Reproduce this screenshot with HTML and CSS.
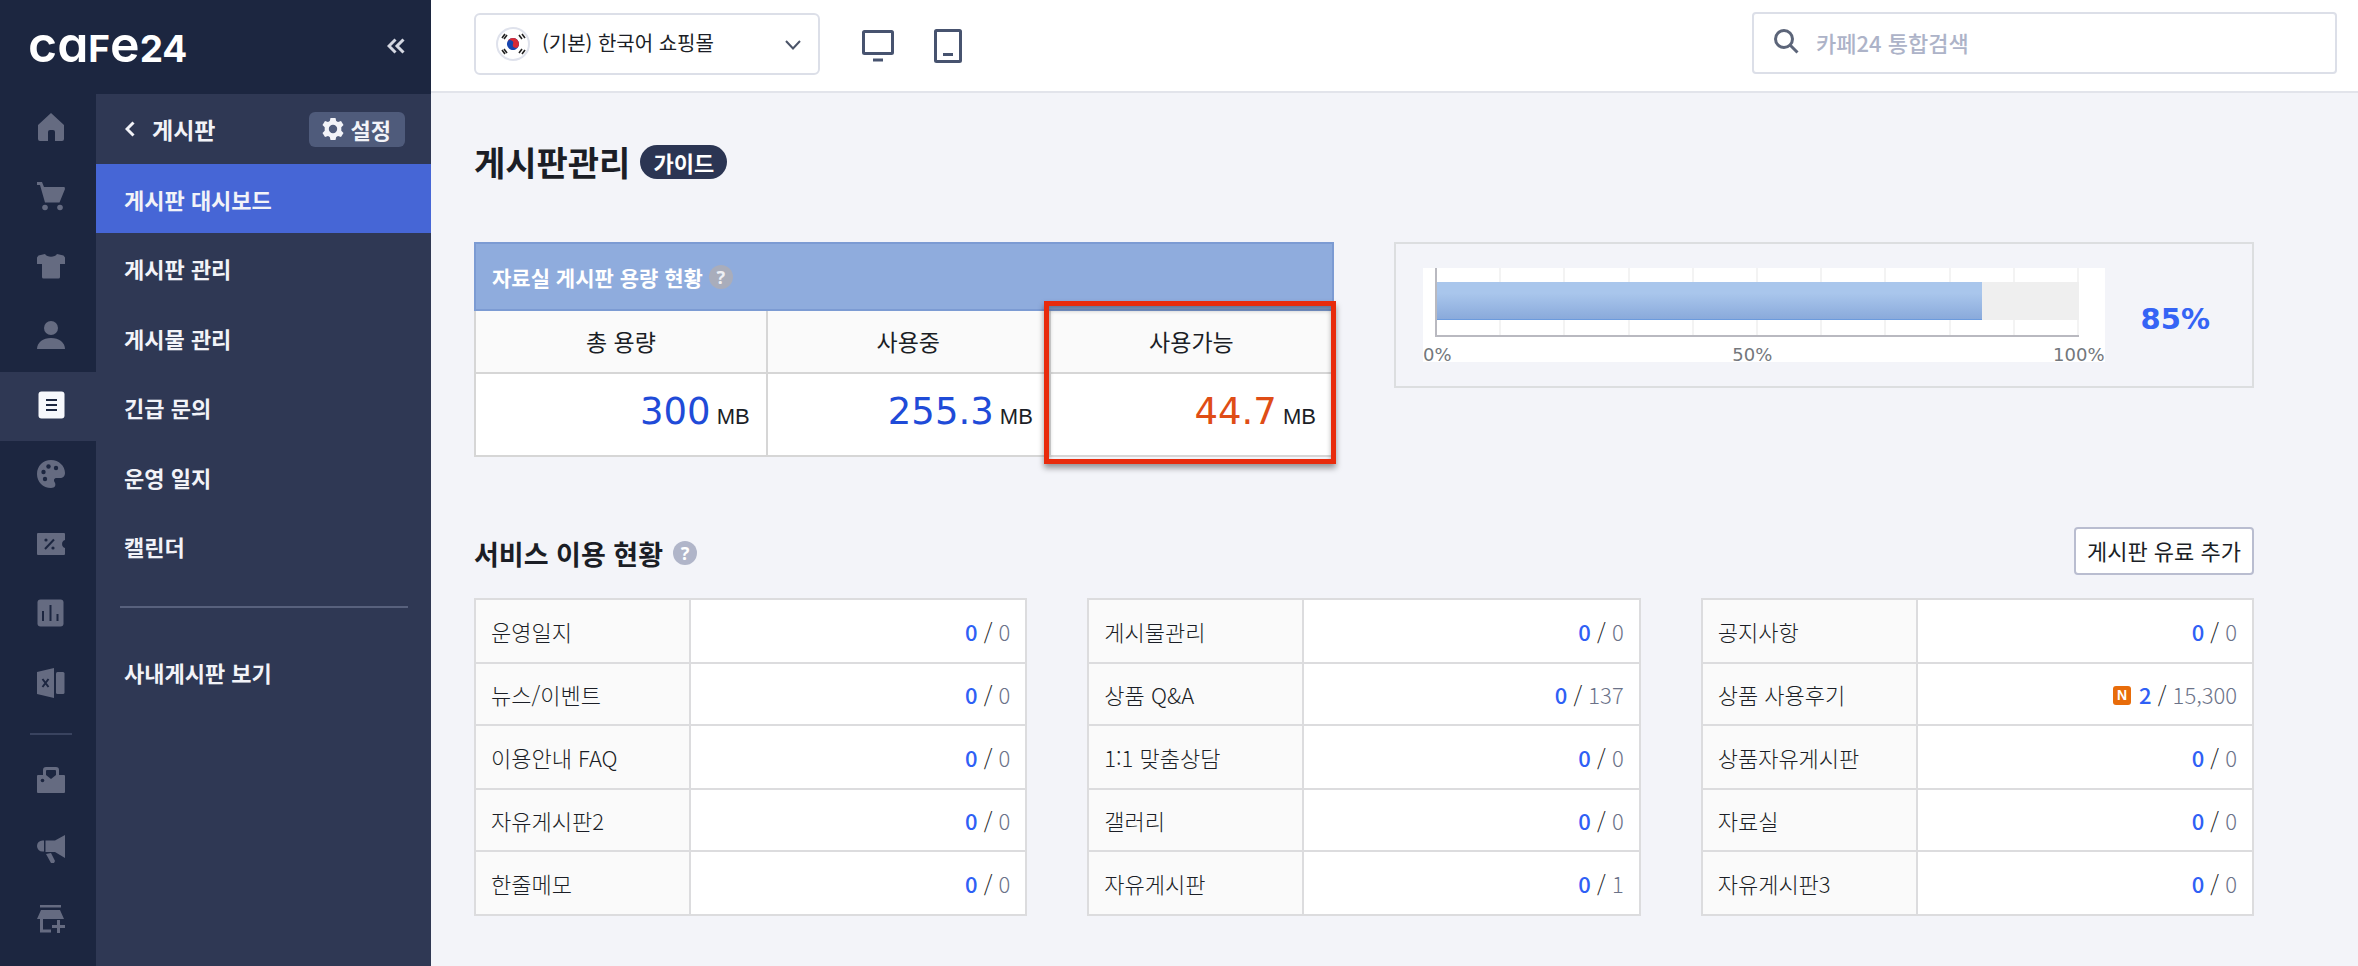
FILE: index.html
```html
<!DOCTYPE html>
<html lang="ko">
<head>
<meta charset="utf-8">
<title>게시판관리</title>
<link rel="stylesheet" href="styles.css">
</head>
<body>
<div class="app">
  <aside class="sidebar">
    <div class="brand">
      <a class="logo" href="#"><span class="logo-low">ca</span>F<span class="logo-low">e</span>24</a>
      <button class="collapse" type="button" aria-label="메뉴 접기">
        <svg width="18" height="16" viewBox="0 0 18 16"><path d="M8.500 1.500 2 8l6.500 6.500M16.500 1.500 10 8l6.500 6.500"/></svg>
      </button>
    </div>
    <div class="menus">
      <nav class="rail" aria-label="주 메뉴">
        <ul>
          <li><a href="#" aria-label="홈"><svg viewBox="0 0 28 28"><path d="M14 0 27 12v14a2 2 0 0 1-2 2h-7v-9a2 2 0 0 0-2-2h-3a2 2 0 0 0-2 2v9H3a2 2 0 0 1-2-2V12z"/></svg></a></li>
          <li><a href="#" aria-label="주문"><svg viewBox="0 0 28 28"><path d="M0 0h5l2 5h20.500l.5 2-5.500 13.500H8L3 3H0z"/><circle cx="8" cy="25.500" r="2.800"/><circle cx="23" cy="25.500" r="2.800"/></svg></a></li>
          <li><a href="#" aria-label="상품"><svg viewBox="0 0 28 28"><path d="M8 2c2 3.500 10 3.500 12 0l6.500 1.500 1.500 2V12h-5v13a1.500 1.500 0 0 1-1.500 1.500h-15A1.500 1.500 0 0 1 5 25V12H0V5.500l1.500-2z"/></svg></a></li>
          <li><a href="#" aria-label="고객"><svg viewBox="0 0 28 28"><circle cx="14" cy="7" r="7"/><path d="M0 28c0-6.500 6-11 14-11s14 4.500 14 11z"/></svg></a></li>
          <li class="on"><a href="#" aria-label="게시판" aria-current="page"><svg viewBox="0 0 28 28"><rect x="1.500" y="0.500" width="26" height="27" rx="3"/><path class="cut" d="M9 9h11M9 14h11M9 19h11"/></svg></a></li>
          <li><a href="#" aria-label="디자인"><svg viewBox="0 0 28 28"><path d="M14 0c8 0 14 6 14 13 0 3-2 5-5 5h-3c-3 0-3.500 2-2.500 4 2 3 .5 6-3.500 6C6 28 0 22 0 14S6 0 14 0z"/><g class="hole"><circle cx="6.500" cy="12" r="2.200"/><circle cx="11.500" cy="6.500" r="2.200"/><circle cx="19" cy="8" r="2.200"/><circle cx="8" cy="19" r="2.200"/></g></svg></a></li>
          <li><a href="#" aria-label="프로모션"><svg viewBox="0 0 28 28"><path d="M1 3h26a1 1 0 0 1 1 1v6a4.200 4.200 0 0 0 0 8v6a1 1 0 0 1-1 1H1a1 1 0 0 1-1-1V4a1 1 0 0 1 1-1z"/><path class="cut" d="M17 9.500 8 19"/><g class="hole"><circle cx="9" cy="10" r="1.600"/><circle cx="16" cy="18" r="1.600"/></g></svg></a></li>
          <li><a href="#" aria-label="통계"><svg viewBox="0 0 28 28"><rect x="0.500" y="0.500" width="26" height="27" rx="3"/><path class="cut" d="M6 12v10M13.500 6v16M20.500 15v7"/></svg></a></li>
          <li><a href="#" aria-label="엑셀"><svg viewBox="0 0 28 28"><path d="m0 3 17-4v30L0 25z"/><rect x="19" y="3" width="8.500" height="22" rx="1.500"/><path class="cut" d="m5.500 10 6 8m0-8-6 8"/></svg></a></li>
        </ul>
        <hr>
        <ul>
          <li><a href="#" aria-label="앱"><svg viewBox="0 0 28 28"><path d="M6 9V4a3 3 0 0 1 3-3h10a3 3 0 0 1 3 3v5h-3V5a1 1 0 0 0-1-1h-8a1 1 0 0 0-1 1v4z"/><path d="M1 9h8l5 4 5-4h8a1 1 0 0 1 1 1v16a1 1 0 0 1-1 1H1a1 1 0 0 1-1-1V10a1 1 0 0 1 1-1z"/><circle class="hole" cx="5.500" cy="14.500" r="1.800"/></svg></a></li>
          <li><a href="#" aria-label="마케팅"><svg viewBox="0 0 28 28"><path d="M7 5.500v11H5.500a5.500 5.500 0 0 1 0-11zM8.500 5.500H18L28 0v23l-10-6H8.500z"/><path d="m9 19 5-1 4 8-1 2h-3z"/></svg></a></li>
          <li><a href="#" aria-label="스토어"><svg viewBox="0 0 28 28"><path d="M3 0h21v2.500H3zM4 5h19l4 9H0z"/><path class="line" d="M4.500 14v12H14"/><path class="line" d="M21.500 15v13M15 21.500h13"/></svg></a></li>
        </ul>
      </nav>
      <nav class="panel" aria-label="게시판">
        <div class="panel-head">
          <a class="back" href="#"><svg width="10" height="16" viewBox="0 0 10 16"><path d="M8.500 1.500 2 8l6.500 6.500"/></svg>게시판</a>
          <button class="settings" type="button"><svg width="22" height="22" viewBox="0 0 22 22"><path fill-rule="evenodd" d="M8.500 0h5l.7 3 1.800 1 3-1L21.500 7l-2.200 2.200v3.600L21.500 15 19 19l-3-1-1.800 1-.7 3h-5l-.7-3L6 18l-3 1-2.500-4 2.200-2.200V9.200L.5 7 3 3l3 1 1.800-1zM11 6.800a4.200 4.200 0 1 0 0 8.400 4.200 4.200 0 0 0 0-8.400z"/></svg>설정</button>
        </div>
        <ul>
          <li class="on"><a href="#" aria-current="page">게시판 대시보드</a></li>
          <li><a href="#">게시판 관리</a></li>
          <li><a href="#">게시물 관리</a></li>
          <li><a href="#">긴급 문의</a></li>
          <li><a href="#">운영 일지</a></li>
          <li><a href="#">캘린더</a></li>
        </ul>
        <hr>
        <ul>
          <li><a href="#">사내게시판 보기</a></li>
        </ul>
      </nav>
    </div>
  </aside>

  <div class="page">
    <header class="topbar">
      <div class="mall">
        <svg class="flag" width="34" height="34" viewBox="0 0 34 34" aria-hidden="true">
          <circle cx="17" cy="17" r="16" fill="#fff" stroke="#dfe2ec" stroke-width="2"/>
          <g transform="rotate(20 17 17)"><circle cx="17" cy="17" r="6" fill="#1746b0"/><path d="M11 17a6 6 0 0 1 12 0 3 3 0 0 1-6 0 3 3 0 0 0-6 0z" fill="#d92a35"/></g>
          <path d="m6 11 3-4M8 12l3-4M23 8l3 4M26 7l3 4M6 23l3 4M8 22l3 4M23 26l3-4M26 27l3-4" stroke="#222" stroke-width="1.600"/>
        </svg>
        <select aria-label="쇼핑몰 선택"><option>(기본) 한국어 쇼핑몰</option></select>
        <svg class="arrow" width="16" height="10" viewBox="0 0 16 10" aria-hidden="true"><path d="m1 1 7 7.500L15 1"/></svg>
      </div>
      <button class="device" type="button" aria-label="PC"><svg width="32" height="32" viewBox="0 0 32 32"><rect x="1.500" y="1.500" width="29" height="22" rx="1"/><path d="M11 30h10"/></svg></button>
      <button class="device" type="button" aria-label="모바일"><svg width="28" height="34" viewBox="0 0 28 34"><rect x="1.500" y="1.500" width="25" height="31" rx="1"/><path d="M9 25.500h10"/></svg></button>
      <div class="search">
        <svg width="25" height="25" viewBox="0 0 25 25" aria-hidden="true"><circle cx="10" cy="10" r="8.500"/><path d="m16 16 7.500 7.500"/></svg>
        <input type="search" aria-label="통합검색" placeholder="카페24 통합검색">
      </div>
    </header>

    <main class="content">
      <div class="title">
        <h1>게시판관리</h1>
        <a class="guide" href="#">가이드</a>
      </div>

      <section class="capacity">
        <div class="quota">
          <table>
            <colgroup><col class="col-total"><col><col></colgroup>
            <thead>
              <tr class="caption"><th colspan="3"><span class="caption-in">자료실 게시판 용량 현황<button class="help" type="button" aria-label="도움말">?</button></span></th></tr>
              <tr class="names"><th>총 용량</th><th>사용중</th><th>사용가능</th></tr>
            </thead>
            <tbody>
              <tr class="values">
                <td><strong>300</strong> MB</td>
                <td><strong>255.3</strong> MB</td>
                <td class="free"><strong>44.7</strong> MB</td>
              </tr>
            </tbody>
          </table>
          <div class="mark"></div>
        </div>
        <div class="usage">
          <div class="chart">
            <div class="plot"><div class="track"><div class="fill" style="width:85%"></div></div></div>
            <div class="axis"><span>0%</span><span>50%</span><span>100%</span></div>
          </div>
          <strong class="rate">85%</strong>
        </div>
      </section>

      <section>
        <div class="service-head">
          <h2>서비스 이용 현황</h2>
          <button class="help cool" type="button" aria-label="도움말">?</button>
          <button class="add" type="button">게시판 유료 추가</button>
        </div>
        <div class="boards">
          <table>
            <tr><th>운영일지</th><td><a href="#">0</a> / <span>0</span></td></tr>
            <tr><th>뉴스/이벤트</th><td><a href="#">0</a> / <span>0</span></td></tr>
            <tr><th>이용안내 FAQ</th><td><a href="#">0</a> / <span>0</span></td></tr>
            <tr><th>자유게시판2</th><td><a href="#">0</a> / <span>0</span></td></tr>
            <tr><th>한줄메모</th><td><a href="#">0</a> / <span>0</span></td></tr>
          </table>
          <table>
            <tr><th>게시물관리</th><td><a href="#">0</a> / <span>0</span></td></tr>
            <tr><th>상품 Q&amp;A</th><td><a href="#">0</a> / <span>137</span></td></tr>
            <tr><th>1:1 맞춤상담</th><td><a href="#">0</a> / <span>0</span></td></tr>
            <tr><th>갤러리</th><td><a href="#">0</a> / <span>0</span></td></tr>
            <tr><th>자유게시판</th><td><a href="#">0</a> / <span>1</span></td></tr>
          </table>
          <table>
            <tr><th>공지사항</th><td><a href="#">0</a> / <span>0</span></td></tr>
            <tr><th>상품 사용후기</th><td><b class="new">N</b><a href="#">2</a> / <span>15,300</span></td></tr>
            <tr><th>상품자유게시판</th><td><a href="#">0</a> / <span>0</span></td></tr>
            <tr><th>자료실</th><td><a href="#">0</a> / <span>0</span></td></tr>
            <tr><th>자유게시판3</th><td><a href="#">0</a> / <span>0</span></td></tr>
          </table>
        </div>
      </section>
    </main>
  </div>
</div>
</body>
</html>
```

FILE: styles.css
```css
* { box-sizing: border-box; }
body {
  margin: 0;
  background: #f3f4f9;
  color: #1b1e26;
  font: 22px/28px "Noto Sans CJK KR", sans-serif;
}
a { color: inherit; text-decoration: none; }
button, input, select { font: inherit; color: inherit; }
button { cursor: pointer; }
ul { margin: 0; padding: 0; list-style: none; }
h1, h2 { margin: 0; font-weight: 700; }
svg { display: block; flex: none; }
table { width: 100%; border-collapse: collapse; table-layout: fixed; }

.app { display: flex; min-height: 100vh; }

/* sidebar */
.sidebar {
  flex: none;
  width: 431px;
  display: flex;
  flex-direction: column;
  background: #1c2640;
  color: #f2f3f8;
}
.brand {
  height: 94px;
  padding: 0 26px 2px 28px;
  display: flex;
  align-items: center;
  justify-content: space-between;
}
.logo { font: 700 37px/56px Inter, sans-serif; color: #fff; }
.logo-low { font-size: 50px; font-weight: 600; font-feature-settings: "cv11"; }
.collapse { padding: 0; border: 0; background: none; }
.collapse path { fill: none; stroke: #d5d8e2; stroke-width: 3; }
.menus { flex: 1; display: flex; }

.rail { width: 96px; }
.rail li { height: 69px; }
.rail li:nth-child(even) { height: 70px; }
.rail a {
  height: 100%;
  padding: 0 0 4px 6px;
  display: flex;
  align-items: center;
  justify-content: center;
}
.rail svg { width: 28px; height: 28px; overflow: visible; fill: #656b81; }
.rail .on { background: #2f3854; }
.rail .on svg { fill: #f7f8fc; }
.rail .hole { fill: #1c2640; }
.rail .cut { fill: none; stroke: #1c2640; stroke-width: 2; }
.rail .line { fill: none; stroke: #656b81; stroke-width: 3; }
.rail hr { height: 2px; margin: 14px 24px 12px 30px; border: 0; background: #39435f; }

.panel { flex: 1; background: #2f3854; font-weight: 700; }
.panel-head {
  height: 70px;
  padding: 0 26px 0 29px;
  display: flex;
  align-items: center;
  justify-content: space-between;
}
.back { display: flex; align-items: center; gap: 17px; font-size: 23px; }
.back path { fill: none; stroke: #f2f3f8; stroke-width: 3; }
.settings {
  height: 35px;
  padding: 0 14px 0 13px;
  display: flex;
  align-items: center;
  gap: 7px;
  border: 0;
  border-radius: 6px;
  background: #4f5b7b;
  font-weight: 700;
}
.settings svg { fill: #f2f3f8; }
.panel li { height: 69px; }
.panel li:nth-child(even) { height: 70px; }
.panel li a { height: 100%; padding-left: 28px; display: flex; align-items: center; }
.panel .on { background: #4666d6; }
.panel hr { height: 2px; margin: 25px 23px 29px 24px; border: 0; background: #58617d; }

/* top bar */
.page { flex: 1; min-width: 0; }
.topbar {
  height: 93px;
  padding: 0 21px 4px 43px;
  display: flex;
  align-items: center;
  border-bottom: 2px solid #e2e4eb;
  background: #fff;
}
.mall { position: relative; width: 346px; margin-right: 42px; }
.mall select {
  width: 100%;
  height: 62px;
  padding: 0 40px 2px 66px;
  appearance: none;
  border: 2px solid #dcdfe8;
  border-radius: 6px;
  background: #fff;
  font-size: 20px;
}
.flag { position: absolute; left: 22px; top: 14px; }
.arrow { position: absolute; right: 19px; top: 27px; }
.arrow path { fill: none; stroke: #4b5468; stroke-width: 2; }
.device { padding: 0; margin: 4px 40px 0 0; border: 0; background: none; }
.device svg { fill: none; stroke: #47536f; stroke-width: 3; }
.search {
  width: 585px;
  height: 62px;
  margin: 0 0 2px auto;
  padding: 0 20px 2px;
  display: flex;
  align-items: center;
  gap: 17px;
  border: 2px solid #dcdfe8;
  border-radius: 4px;
}
.search svg { fill: none; stroke: #5c6579; stroke-width: 3; }
.search input { flex: 1; min-width: 0; padding: 0; border: 0; outline: 0; background: none; }
.search input::placeholder { color: #adb3c8; opacity: 1; font-weight: 500; }

/* content */
.content { padding: 45px 104px 49px 43px; }
.title { height: 48px; margin-bottom: 56px; display: flex; align-items: center; gap: 10px; }
h1 { font-size: 34px; line-height: 48px; }
.guide {
  padding: 3px 13px;
  border-radius: 17px;
  background: #2b3553;
  color: #fff;
  font-weight: 700;
}

.capacity { display: grid; grid-template-columns: 1fr 1fr; gap: 60px; align-items: start; }
.quota { position: relative; }
.quota th, .quota td { padding: 0 16px; border: 2px solid #d6d6d6; background: #fff; }
.col-total { width: 34%; }
.quota .caption th {
  height: 67px;
  border-color: #7c9bd3;
  background: #8facdd;
  color: #fff;
  font-size: 21px;
  text-align: left;
}
.caption-in { display: flex; align-items: center; gap: 6px; }
.quota .names th {
  height: 63px;
  padding-bottom: 2px;
  background: #fafafa;
  font-size: 23px;
  font-weight: 400;
}
.quota .values td {
  height: 83px;
  padding-bottom: 6px;
  font-family: "Liberation Sans", sans-serif;
  text-align: right;
}
.values strong { color: #1f4bd8; font: 400 37px/44px "DejaVu Sans", sans-serif; }
.values .free strong { color: #df4d16; }
.mark {
  position: absolute;
  top: 59px;
  right: -2px;
  bottom: -7px;
  width: 34%;
  border: 5px solid #e82b0c;
  box-shadow: 0 4px 6px rgba(0, 0, 0, .4), inset 0 4px 5px rgba(0, 0, 0, .3);
  pointer-events: none;
}
.help {
  width: 24px;
  height: 24px;
  padding: 0;
  border: 0;
  border-radius: 50%;
  background: #a9adbb;
  color: #eef0f5;
  font: 700 18px/24px "Noto Sans", sans-serif;
}
.help.cool { margin-top: 4px; background: #b0b5c9; color: #fff; }

.usage {
  height: 146px;
  padding: 4px 42px 4px 27px;
  display: flex;
  align-items: center;
  gap: 36px;
  border: 2px solid #dcdee0;
}
.chart { flex: 1; background: #fff; color: #73777c; }
.plot {
  height: 69px;
  margin: 0 26px 0 12px;
  padding: 14px 0 15px;
  border-left: 2px solid #b9b9c0;
  border-bottom: 2px solid #b9b9c0;
  background: repeating-linear-gradient(to left, #f3f3f3 0 2px, transparent 2px 10%);
}
.track { height: 38px; background: #efefef; }
.fill {
  height: 100%;
  border-bottom: 1px solid #6c9bdd;
  background: linear-gradient(#a9c6ec 30%, #8aaadb);
}
.axis {
  padding-top: 11px;
  display: flex;
  justify-content: space-between;
  font: 18px/14px "DejaVu Sans", sans-serif;
}
.rate { margin-top: 8px; color: #3564f5; font: 700 29px/34px "DejaVu Sans", sans-serif; }

.service-head { height: 48px; margin: 70px 0 23px; display: flex; align-items: center; }
h2 { margin-right: 10px; font-size: 27px; line-height: 48px; padding-top: 6px; }
.add {
  height: 48px;
  margin-left: auto;
  padding: 0 11px 2px;
  border: 2px solid #b9bdd0;
  border-radius: 4px;
  background: #fff;
}
.boards { display: grid; grid-template-columns: repeat(3, 1fr); gap: 60px; }
.boards th, .boards td { padding: 0 15px 1px; border: 2px solid #dcdcde; font-weight: 300; }
.boards tr { height: 64px; }
.boards tr:nth-child(even) { height: 62px; }
.boards th { width: 39%; background: #fafafa; text-align: left; }
.boards td { background: #fff; text-align: right; }
.boards td a { color: #2f60f5; font-weight: 500; }
.boards td span { color: #6b7288; }
.new {
  display: inline-block;
  width: 18px;
  margin-right: 8px;
  border-radius: 3px;
  background: #e86c0a;
  color: #fff;
  font: 700 14px/19px "Liberation Sans", sans-serif;
  text-align: center;
  vertical-align: 4px;
}
```
